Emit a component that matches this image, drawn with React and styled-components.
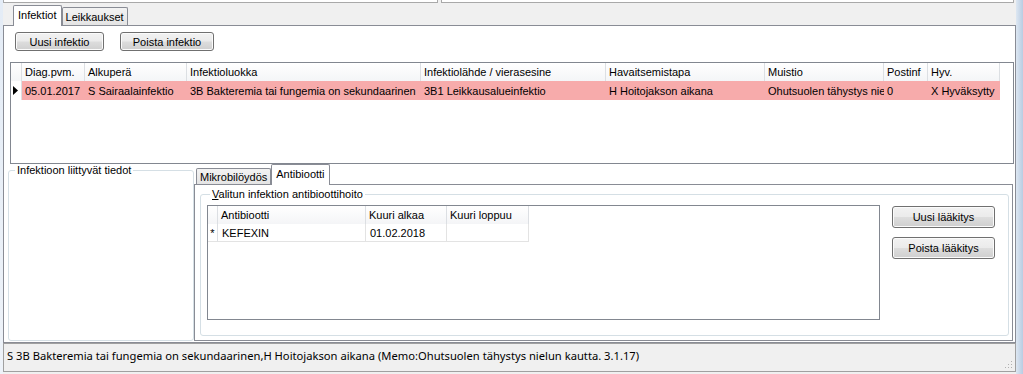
import React from "react";
import styled, { createGlobalStyle } from "styled-components";

const GlobalStyle = createGlobalStyle`
  html, body {
    margin: 0;
    padding: 0;
    background: #f0f0f0;
  }
  body {
    font-family: "Liberation Sans", Arial, sans-serif;
    font-size: 11px;
    color: #000;
  }
  * {
    box-sizing: border-box;
  }
`;

const Window = styled.div`
  width: 1023px;
  height: 374px;
  display: flex;
  overflow: hidden;
  background: #f0f0f0;
`;

const FrameEdge = styled.div`
  flex-shrink: 0;
  width: ${(p) => p.$w}px;
  background: ${(p) => p.$bg};
`;

const Content = styled.div`
  width: 1013px;
  display: flex;
  flex-direction: column;
`;

const TopStrip = styled.div`
  display: flex;
  gap: 3px;
  height: 3px;
`;

const TopPane = styled.div`
  width: ${(p) => p.$w}px;
  height: 3px;
  background: #fff;
  border: 1px solid #a9a9a9;
  border-top: none;
`;

const TabStrip = styled.div`
  display: flex;
  align-items: flex-end;
  height: ${(p) => p.$h}px;
  padding-left: ${(p) => p.$indent}px;
`;

const Tab = styled.div`
  position: relative;
  z-index: ${(p) => (p.$active ? 2 : 1)};
  display: flex;
  align-items: center;
  height: ${(p) => p.$h}px;
  margin-bottom: ${(p) => (p.$active ? -1 : 0)}px;
  padding: 0 ${(p) => (p.$active ? 4 : 3)}px ${(p) => (p.$active ? 2 : 0)}px;
  border: 1px solid #898c95;
  border-bottom: none;
  border-radius: 2px 2px 0 0;
  background: ${(p) =>
    p.$active ? "#fff" : "linear-gradient(#f3f3f3, #e4e4e4)"};
  white-space: nowrap;
`;

const TabPage = styled.div`
  height: ${(p) => p.$h}px;
  border: 1px solid #898c95;
  background: #fff;
  display: flex;
  flex-direction: column;
`;

const ButtonRow = styled.div`
  display: flex;
  gap: 16px;
  margin-top: 6px;
  padding-left: 11px;
`;

const Button = styled.button`
  width: ${(p) => p.$w}px;
  height: ${(p) => p.$h}px;
  padding: 0;
  font-family: "Liberation Sans", Arial, sans-serif;
  font-size: 11px;
  color: #000;
  border: 1px solid #707070;
  border-radius: 3px;
  background: linear-gradient(#f2f2f2 0%, #ebebeb 48%, #dddddd 52%, #cfcfcf 100%);
  box-shadow: inset 0 0 0 1px #fbfbfb;
`;

const Grid = styled.div`
  width: ${(p) => p.$w}px;
  height: ${(p) => p.$h}px;
  margin: ${(p) => p.$margin};
  border: 1px solid #828790;
  background: #fff;
  flex-shrink: 0;
`;

const Row = styled.div`
  display: flex;
  height: ${(p) => p.$h}px;
`;

const HeadCell = styled.div`
  width: ${(p) => p.$w}px;
  flex-shrink: 0;
  display: flex;
  align-items: center;
  padding-left: 3px;
  background: linear-gradient(#ffffff, #f4f5f7);
  border-right: 1px solid #dcdfe3;
  white-space: nowrap;
  overflow: hidden;
`;

const Cell = styled.div`
  width: ${(p) => p.$w}px;
  flex-shrink: 0;
  display: flex;
  align-items: center;
  padding-left: ${(p) => p.$pad ?? 3}px;
  background: ${(p) => (p.$selected ? "#f7abab" : "#fff")};
  border-right: ${(p) => (p.$lined ? "1px solid #e3e3e3" : "none")};
  border-bottom: ${(p) => (p.$lined ? "1px solid #e3e3e3" : "none")};
  white-space: nowrap;
  overflow: hidden;
`;

const RowHeader = styled.div`
  width: ${(p) => p.$w}px;
  flex-shrink: 0;
  display: flex;
  align-items: center;
  justify-content: center;
  background: #fff;
  border-right: 1px solid #dcdfe3;
  border-bottom: ${(p) => (p.$lined ? "1px solid #e3e3e3" : "none")};
`;

const Lower = styled.div`
  display: flex;
  height: 177px;
  padding-left: 4px;
`;

const GroupBox = styled.fieldset`
  width: ${(p) => p.$w}px;
  height: ${(p) => p.$h}px;
  margin: ${(p) => p.$margin || 0};
  padding: ${(p) => p.$pad || 0};
  border: 1px solid #d5dfe5;
  border-radius: 3px;
  min-width: 0;
  flex-shrink: 0;

  legend {
    margin-left: ${(p) => p.$legendIndent}px;
    padding: 0 2px;
    line-height: 13px;
    font-size: 11px;
  }
`;

const SubTabs = styled.div`
  width: 819px;
  display: flex;
  flex-direction: column;
`;

const SubPanel = styled.div`
  height: 157px;
  border: 1px solid #898c95;
  background: #fff;
`;

const InnerLayout = styled.div`
  display: flex;
  align-items: flex-start;
`;

const ButtonColumn = styled.div`
  display: flex;
  flex-direction: column;
  gap: 9px;
  margin: 1px 0 0 12px;
`;

const StatusBar = styled.div`
  position: relative;
  height: 29px;
  padding: 4px 0 0 3px;
  border: 1px solid #a0a0a0;
  background: #f0f0f0;
  font-family: "Noto Sans", "Open Sans", sans-serif;
  font-size: 11.2px;
  line-height: 16px;
  white-space: nowrap;
`;

const Grip = styled.svg`
  position: absolute;
  right: 2px;
  bottom: 2px;
`;

const mainColumns = [
  { label: "Diag.pvm.", w: 63, value: "05.01.2017" },
  { label: "Alkuperä", w: 102, value: "S Sairaalainfektio" },
  { label: "Infektioluokka", w: 234, value: "3B Bakteremia tai fungemia on sekundaarinen" },
  { label: "Infektiolähde / vierasesine", w: 185, value: "3B1 Leikkausalueinfektio" },
  { label: "Havaitsemistapa", w: 159, value: "H Hoitojakson aikana" },
  { label: "Muistio", w: 119, value: "Ohutsuolen tähystys nielun kautta. 3.1.17" },
  { label: "Postinf", w: 44, value: "0" },
  { label: "Hyv.", w: 72, value: "X Hyväksytty" },
];

const antibioticColumns = [
  { label: "Antibiootti", w: 148, value: "KEFEXIN" },
  { label: "Kuuri alkaa", w: 81, value: "01.02.2018" },
  { label: "Kuuri loppuu", w: 82, value: "" },
];

const CurrentRowArrow = () => (
  <svg width="6" height="9" viewBox="0 0 6 9">
    <polygon points="0,0 5,4.5 0,9" fill="#000" />
  </svg>
);

const App = () => {
  return (
    <>
      <GlobalStyle />
      <Window>
        <FrameEdge $w={3} $bg="linear-gradient(#e4ecf6, #eef3f9)" />
        <Content>
          <TopStrip>
            <TopPane $w={435} />
            <TopPane $w={573} />
          </TopStrip>

          <TabStrip $h={22} $indent={10}>
            <Tab $active $h={21}>Infektiot</Tab>
            <Tab $h={18}>Leikkaukset</Tab>
          </TabStrip>

          <TabPage $h={318}>
            <ButtonRow>
              <Button $w={89} $h={19}>Uusi infektio</Button>
              <Button $w={94} $h={19}>Poista infektio</Button>
            </ButtonRow>

            <Grid $w={1004} $h={102} $margin="11px 0 0 6px">
              <Row $h={18}>
                <HeadCell $w={11} />
                {mainColumns.map((col) => (
                  <HeadCell key={col.label} $w={col.w}>
                    {col.label}
                  </HeadCell>
                ))}
              </Row>
              <Row $h={19}>
                <RowHeader $w={11}>
                  <CurrentRowArrow />
                </RowHeader>
                {mainColumns.map((col) => (
                  <Cell key={col.label} $w={col.w} $selected>
                    {col.value}
                  </Cell>
                ))}
              </Row>
            </Grid>

            <Lower>
              <GroupBox $w={186} $h={177} $legendIndent={6}>
                <legend>Infektioon liittyvät tiedot</legend>
              </GroupBox>

              <SubTabs>
                <TabStrip $h={20} $indent={2}>
                  <Tab $h={16}>Mikrobilöydös</Tab>
                  <Tab $active $h={21}>Antibiootti</Tab>
                </TabStrip>
                <SubPanel>
                  <GroupBox
                    $w={809}
                    $h={148}
                    $margin="3px 0 0 5px"
                    $pad="4px 0 0 6px"
                    $legendIndent={3}
                  >
                    <legend>
                      <u>V</u>alitun infektion antibioottihoito
                    </legend>
                    <InnerLayout>
                      <Grid $w={673} $h={115} $margin="0">
                        <Row $h={18}>
                          <HeadCell $w={10} />
                          {antibioticColumns.map((col) => (
                            <HeadCell key={col.label} $w={col.w}>
                              {col.label}
                            </HeadCell>
                          ))}
                        </Row>
                        <Row $h={18}>
                          <RowHeader $w={10} $lined>*</RowHeader>
                          {antibioticColumns.map((col) => (
                            <Cell key={col.label} $w={col.w} $pad={4} $lined>
                              {col.value}
                            </Cell>
                          ))}
                        </Row>
                      </Grid>
                      <ButtonColumn>
                        <Button $w={103} $h={22}>Uusi lääkitys</Button>
                        <Button $w={103} $h={22}>Poista lääkitys</Button>
                      </ButtonColumn>
                    </InnerLayout>
                  </GroupBox>
                </SubPanel>
              </SubTabs>
            </Lower>
          </TabPage>

          <StatusBar>
            S 3B Bakteremia tai fungemia on sekundaarinen,H Hoitojakson aikana
            (Memo:Ohutsuolen tähystys nielun kautta. 3.1.17)
            <Grip width="10" height="10" viewBox="0 0 10 10">
              {[
                [8, 2],
                [8, 5],
                [5, 5],
                [8, 8],
                [5, 8],
                [2, 8],
              ].map(([x, y]) => (
                <rect key={`${x}-${y}`} x={x} y={y} width="1" height="1" fill="#b0b0b0" />
              ))}
            </Grip>
          </StatusBar>
        </Content>
        <FrameEdge $w={7} $bg="linear-gradient(90deg, #dde7f2, #b9cce2)" />
      </Window>
    </>
  );
};

export default App;
